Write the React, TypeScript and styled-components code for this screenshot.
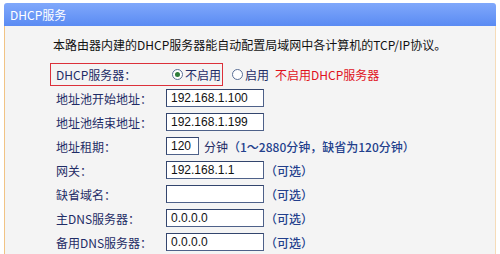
import React, { FC } from "react";
import styled, { createGlobalStyle } from "styled-components";

const GlobalStyle = createGlobalStyle`
  body {
    margin: 0;
    background: #ffffff;
    font-family: "Noto Sans CJK SC", "Noto Sans", sans-serif;
  }
`;

const Panel = styled.div`
  width: 492px;
  margin: 3px 4px 0;
`;

const Header = styled.div`
  height: 23px;
  line-height: 23px;
  padding-left: 6px;
  border-radius: 3px 3px 0 0;
  background: linear-gradient(#80a8fb, #5a8bf3);
  color: #ffffff;
  font-size: 12px;
`;

const Body = styled.div`
  height: 228px;
  background: #f4f4f4;
  border-left: 1px solid #f1c384;
  border-right: 1px solid #f6dcb9;
  overflow: hidden;
`;

const Intro = styled.p`
  margin: 0;
  height: 36px;
  padding-left: 48px;
  display: flex;
  align-items: center;
  font-size: 12px;
  color: #111111;
`;

const Form = styled.div`
  padding-left: 51px;
`;

const Row = styled.div`
  display: flex;
  align-items: center;
  height: 24px;
  font-size: 12px;
`;

const Label = styled.span`
  width: 110px;
  flex-shrink: 0;
  color: #1f2c66;
`;

const Highlight = styled.div`
  display: flex;
  align-items: center;
  box-sizing: border-box;
  height: 23px;
  margin-left: -6px;
  padding: 0 1px 0 5px;
  border: 1px solid #dc303a;
`;

const Option = styled.label<{ $gap: number }>`
  display: flex;
  align-items: center;
  margin-left: ${(p) => p.$gap}px;
  color: #1f2c66;
`;

const Radio = styled.span<{ $checked?: boolean }>`
  position: relative;
  box-sizing: border-box;
  width: 11px;
  height: 11px;
  margin-right: 2px;
  border-radius: 50%;
  border: 1px solid #5a6f96;
  background: #ffffff;

  &::after {
    content: "";
    display: ${(p) => (p.$checked ? "block" : "none")};
    position: absolute;
    left: 2px;
    top: 2px;
    width: 5px;
    height: 5px;
    border-radius: 50%;
    background: #2f7d3a;
  }
`;

const Note = styled.span`
  margin-left: 6px;
  color: #e0121c;
`;

const Field = styled.div<{ $width: number }>`
  box-sizing: border-box;
  width: ${(p) => p.$width}px;
  height: 18px;
  padding-left: 4px;
  border: 1px solid #4e6189;
  border-top-color: #33456d;
  border-left-color: #33456d;
  background: #ffffff;
  font-family: "Liberation Sans", sans-serif;
  font-size: 12px;
  line-height: 16px;
  color: #111111;
  white-space: nowrap;
  overflow: hidden;
`;

const Unit = styled.span`
  margin-left: 5px;
  color: #1f2c66;
`;

const Hint = styled.span<{ $gap?: number }>`
  margin-left: ${(p) => p.$gap ?? 1}px;
  color: #233f8c;
  font-weight: 500;
`;

const fields = [
  { label: "地址池开始地址：", value: "192.168.1.100" },
  { label: "地址池结束地址：", value: "192.168.1.199" },
];

const optional = [
  { label: "网关：", value: "192.168.1.1" },
  { label: "缺省域名：", value: "" },
  { label: "主DNS服务器：", value: "0.0.0.0" },
  { label: "备用DNS服务器：", value: "0.0.0.0" },
];

const App: FC = () => {
  return (
    <>
      <GlobalStyle />
      <Panel>
        <Header>DHCP服务</Header>
        <Body>
          <Intro>本路由器内建的DHCP服务器能自动配置局域网中各计算机的TCP/IP协议。</Intro>
          <Form>
            <Row>
              <Highlight>
                <Label>DHCP服务器：</Label>
                <Option $gap={6}>
                  <Radio $checked />
                  不启用
                </Option>
              </Highlight>
              <Option $gap={9}>
                <Radio />
                启用
              </Option>
              <Note>不启用DHCP服务器</Note>
            </Row>

            {fields.map((f) => (
              <Row key={f.label}>
                <Label>{f.label}</Label>
                <Field $width={98}>{f.value}</Field>
              </Row>
            ))}

            <Row>
              <Label>地址租期：</Label>
              <Field $width={33}>120</Field>
              <Unit>分钟</Unit>
              <Hint $gap={0}>（1～2880分钟，缺省为120分钟）</Hint>
            </Row>

            {optional.map((f) => (
              <Row key={f.label}>
                <Label>{f.label}</Label>
                <Field $width={98}>{f.value}</Field>
                <Hint>（可选）</Hint>
              </Row>
            ))}
          </Form>
        </Body>
      </Panel>
    </>
  );
};

export default App;
